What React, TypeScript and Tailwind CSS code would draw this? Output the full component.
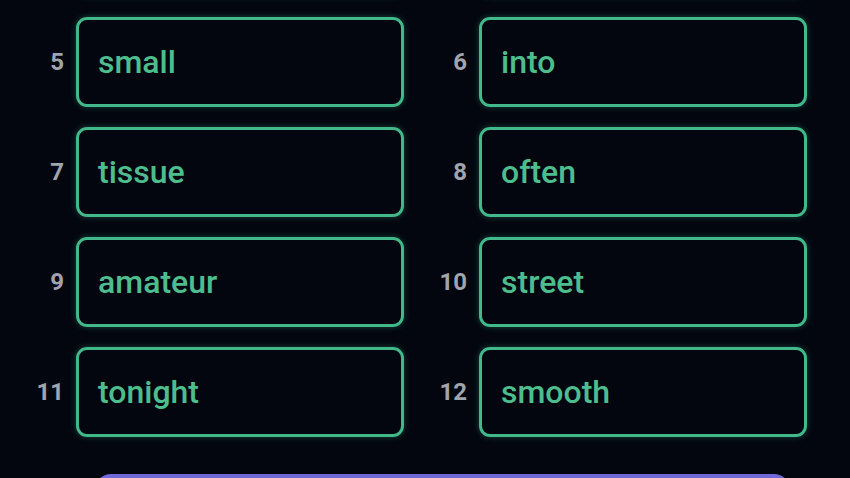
import React from "react";

const rows: [number, string][][] = [
  [[0, ""], [0, ""]],
  [[5, "small"], [6, "into"]],
  [[7, "tissue"], [8, "often"]],
  [[9, "amateur"], [10, "street"]],
  [[11, "tonight"], [12, "smooth"]],
];

function Cell({ n, word }: { n: number; word: string }) {
  return (
    <div className="flex items-center gap-[12px]">
      <div className="w-[30px] text-right text-[24px] font-bold text-[#a0a4ae] leading-none">{n > 0 ? n : ""}</div>
      <div className="w-[328px] h-[90px] rounded-[11px] border-[3px] border-[#41b98b] shadow-[0_0_6px_rgba(65,185,139,0.35)] flex items-center pl-[19px]">
        <span className="text-[32px] font-medium text-[#4dbd8e] leading-none">{word}</span>
      </div>
    </div>
  );
}

export default function App() {
  return (
    <div
      className="w-[850px] h-[478px] overflow-hidden bg-[#03060f]"
      style={{ fontFamily: "Roboto, 'Noto Sans', sans-serif" }}
    >
      <div className="-mt-[93px] flex flex-col">
        <div className="flex flex-col gap-[20px] pl-[34px]">
          {rows.map((r, i) => (
            <div key={i} className="flex gap-[33px]">
              <Cell n={r[0][0]} word={r[0][1]} />
              <Cell n={r[1][0]} word={r[1][1]} />
            </div>
          ))}
        </div>
        <div className="mt-[37px] ml-[95px] w-[695px] h-[56px] rounded-[16px] bg-[#7068d8]" />
      </div>
    </div>
  );
}
